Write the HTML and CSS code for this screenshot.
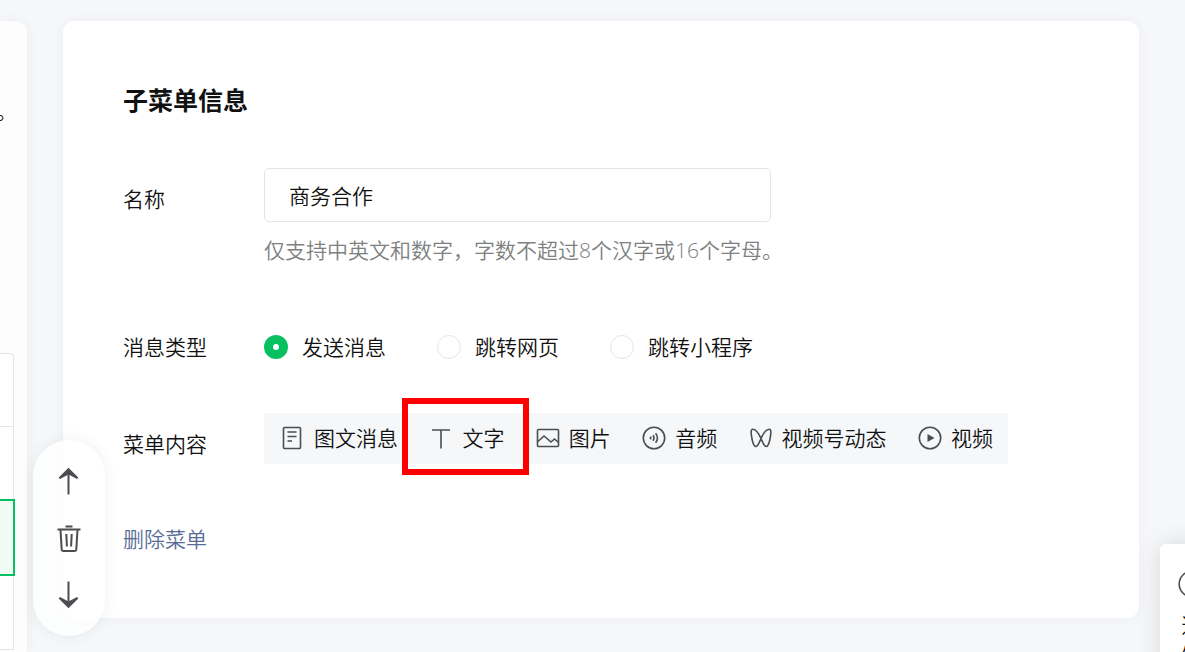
FILE: index.html
```html
<!DOCTYPE html>
<html lang="zh-CN">
<head>
<meta charset="utf-8">
<title>子菜单信息</title>
<link rel="stylesheet" href="styles.css">
</head>
<body>
<div class="page">
  <aside class="preview">
    <p class="preview-tip">。</p>
    <ul class="menu-list">
      <li class="menu-item menu-item-first"></li>
      <li class="menu-item"></li>
      <li class="menu-item menu-item-active"></li>
      <li class="menu-item"></li>
    </ul>
  </aside>

  <main class="card">
    <h1 class="card-title">子菜单信息</h1>
    <form class="form">
      <div class="row row-name">
        <label class="label label-name" for="menu-name">名称</label>
        <div class="field">
          <input class="text-input" id="menu-name" type="text" value="商务合作">
          <p class="hint">仅支持中英文和数字，字数不超过8个汉字或16个字母。</p>
        </div>
      </div>

      <div class="row row-type" role="radiogroup" aria-labelledby="type-label">
        <span class="label" id="type-label">消息类型</span>
        <div class="radios">
          <label class="radio"><input class="radio-input" type="radio" name="type" checked>发送消息</label>
          <label class="radio"><input class="radio-input" type="radio" name="type">跳转网页</label>
          <label class="radio"><input class="radio-input" type="radio" name="type">跳转小程序</label>
        </div>
      </div>

      <div class="row row-content">
        <span class="label label-content">菜单内容</span>
        <div class="tabs">
          <button class="tab" type="button">
            <svg class="icon" viewBox="0 0 24 24"><rect x="2.500" y="1.500" width="17" height="21" rx="1"/><path d="M6.500 6h9M6.500 10.500h9M6.500 15h4.500"/></svg>图文消息</button>
          <button class="tab tab-marked" type="button">
            <svg class="icon" viewBox="0 0 24 24"><path d="M3 4h18M12 4v18.500"/></svg>文字</button>
          <button class="tab" type="button">
            <svg class="icon" viewBox="0 0 24 24"><rect x="1.500" y="3.500" width="21" height="17" rx="1"/><path d="M2 15.500l6-5.500 7 6 3.500-3 4 3.500"/></svg>图片</button>
          <button class="tab" type="button">
            <svg class="icon" viewBox="0 0 24 24"><circle cx="12" cy="12" r="10.700"/><path d="M11 9.300q2 2.700 0 5.400M13.600 7.300q3.700 4.700 0 9.400"/><path class="solid" d="M7.200 12l1.800-1.900q1.200 1.900 0 3.800z"/></svg>音频</button>
          <button class="tab" type="button">
            <svg class="icon" viewBox="0 0 24 24"><path d="M12 12.500C10 8 6.500 3.300 3.700 3.300 1.500 3.300 2 8 3 13c.9 4.500 2.200 7.500 3.900 7.500 2 0 3.100-3.500 5.100-8S17.500 3.300 20.300 3.300C22.500 3.300 22 8 21 13c-.9 4.500-2.200 7.500-3.900 7.500-2 0-3.100-3.500-5.100-8z"/></svg>视频号动态</button>
          <button class="tab" type="button">
            <svg class="icon" viewBox="0 0 24 24"><circle cx="12" cy="12" r="10.700"/><path class="solid" d="M9.500 8v8l7-4z"/></svg>视频</button>
        </div>
      </div>

      <a class="delete-link" href="#">删除菜单</a>
    </form>
  </main>
</div>

<div class="sorter">
  <button class="sorter-button" type="button" aria-label="上移">
    <svg class="sorter-icon" viewBox="0 0 28 28"><path class="thick" d="M13.500 27.500V3"/><path class="solid" d="M13.500 .8l9.800 9.800-1.300 1.300L13.500 7.500l-8.500 4.400-1.300-1.300z"/></svg></button>
  <button class="sorter-button" type="button" aria-label="删除">
    <svg class="sorter-icon" viewBox="0 0 28 28"><path class="thick" d="M10.500 2.500h7M2.500 5.500h23M5.500 6l1.200 19.200q.1 1.800 1.800 1.800h11q1.700 0 1.800-1.800L22.500 6M11.300 10l.6 12.500M16.700 10l-.6 12.500"/></svg></button>
  <button class="sorter-button" type="button" aria-label="下移">
    <svg class="sorter-icon" viewBox="0 0 28 28"><path class="thick" d="M13.500 .5V25"/><path class="solid" d="M13.500 27.200l9.800-9.800-1.300-1.300L13.500 20.500l-8.500-4.400-1.300 1.300z"/></svg></button>
</div>

<aside class="notice">
  <svg class="notice-icon" viewBox="0 0 28 28"><circle cx="14" cy="14" r="12.800"/></svg>
  <span class="notice-text">通知</span>
</aside>
</body>
</html>
```
FILE: styles.css
```css
* {
  box-sizing: border-box;
}

body {
  margin: 0;
  height: 100vh;
  position: relative;
  overflow: hidden;
  background: #f6f7f9;
  color: #111;
  font: 350 21px/30px "Open Sans", "Noto Sans CJK SC", sans-serif;
}

button,
input {
  font: inherit;
  color: inherit;
}

svg {
  fill: none;
  stroke: #4c4d51;
  stroke-width: 1.600;
  flex: none;
}

.solid {
  fill: #4c4d51;
  stroke: none;
}

.thick {
  stroke-width: 2;
}

.page {
  display: flex;
  align-items: flex-start;
  gap: 36px;
  padding: 21px 46px 0 0;
}

.preview {
  flex: 0 0 27px;
  min-height: calc(100vh - 21px);
  border-radius: 0 12px 0 0;
  background: #fdfdfd;
  box-shadow: 0 0 12px rgba(30, 60, 90, 0.06);
}

.preview-tip {
  margin: 0 0 0 -4px;
  padding: 75px 0 227px;
  width: 21px;
}

.menu-list {
  margin: 0;
  padding: 0;
  width: 14px;
  list-style: none;
  border: 1px solid #e4e5e7;
  border-width: 1px 1px 0 0;
  border-radius: 0 4px 0 0;
  background: #fff;
}

.menu-item {
  height: 74px;
  border-bottom: 1px solid #e4e5e7;
}

.menu-item-first {
  height: 73px;
}

.menu-item-active {
  height: 77px;
  margin: -2px -2px 0 0;
  border: 2px solid #07c160;
  border-left: 0;
  background: #f1fbf6;
}

.card {
  flex: 1;
  min-width: 0;
  padding: 59px 60px 64px;
  border-radius: 12px;
  background: #fff;
  box-shadow: 0 0 12px rgba(30, 60, 90, 0.05);
}

.card-title {
  margin: 0 0 48px;
  font-size: 25px;
  font-weight: 700;
  line-height: 40px;
}

.form {
  display: flex;
  flex-direction: column;
  align-items: stretch;
}

.row {
  display: grid;
  grid-template-columns: 141px minmax(0, 1fr);
  align-items: start;
}

.row-name {
  margin-bottom: 67px;
}

.row-content {
  margin: 51px 0 60px;
}

.label-name,
.label-content {
  padding-top: 16px;
}

.text-input {
  display: block;
  width: 100%;
  max-width: 507px;
  height: 54px;
  padding: 0 24px;
  border: 1px solid #e4e5e7;
  border-radius: 5px;
  background: #fff;
}

.hint {
  margin: 13px 0 0;
  color: #7e7f80;
}

.radios {
  display: flex;
  gap: 51px;
}

.radio {
  display: flex;
  align-items: center;
  gap: 14px;
}

.radio-input {
  appearance: none;
  width: 24px;
  height: 24px;
  margin: 0;
  border: 1px solid #e4e5e7;
  border-radius: 50%;
  background: #fff;
}

.radio-input:checked {
  border: 9px solid #07c160;
}

.tabs {
  display: flex;
  justify-content: space-between;
  max-width: 744px;
  padding: 0 15px 0 17px;
  background: #f6f7f9;
}

.tab {
  position: relative;
  display: flex;
  align-items: center;
  gap: 9px;
  height: 51px;
  padding: 0 0 2px;
  border: 0;
  background: none;
  white-space: nowrap;
}

.tab-marked::after {
  content: "";
  position: absolute;
  inset: -15px -25px -11px -27px;
  border: 6px solid #f00;
}

.icon {
  width: 24px;
  height: 24px;
}

.delete-link {
  align-self: flex-start;
  color: #576b95;
  text-decoration: none;
}

.sorter {
  position: absolute;
  left: 33px;
  top: 440px;
  display: flex;
  flex-direction: column;
  align-items: center;
  gap: 29px;
  padding: 27px 22px;
  border-radius: 36px;
  background: rgba(255, 255, 255, 0.8);
  box-shadow: 0 0 14px rgba(30, 60, 90, 0.08);
}

.sorter-button {
  display: block;
  padding: 0;
  border: 0;
  background: none;
}

.sorter-icon {
  display: block;
  width: 28px;
  height: 28px;
}

.notice {
  position: absolute;
  top: 544px;
  right: -35px;
  display: flex;
  flex-direction: column;
  align-items: center;
  gap: 12px;
  width: 60px;
  padding: 26px 0;
  border-radius: 6px;
  background: #fff;
  box-shadow: 0 0 24px rgba(0, 0, 0, 0.12);
}

.notice-icon {
  width: 28px;
  height: 28px;
  margin-left: 4px;
}

.notice-text {
  width: 21px;
  margin-left: 4px;
  word-break: break-all;
}
```
